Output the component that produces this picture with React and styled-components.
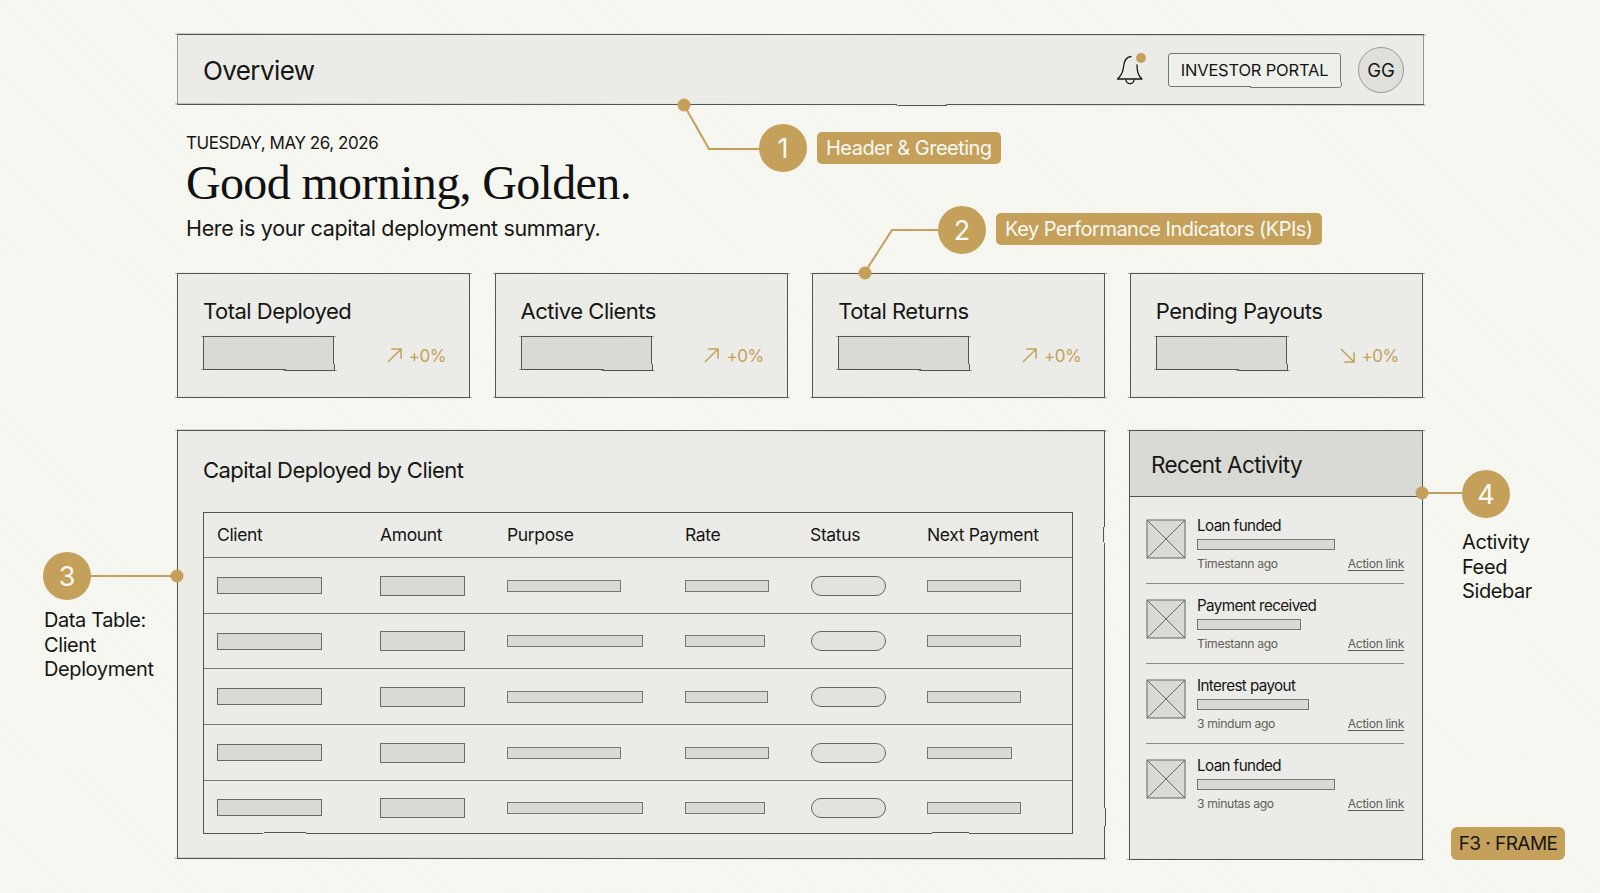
import styled, { createGlobalStyle, css } from "styled-components"

const INK = "#161614"
const GOLD = "#c4a05a"
const PANEL = "#ebece7"
const FILL = "#d9dad5"
const LINE = "#55554f"

const GlobalStyle = createGlobalStyle`
  html, body {
    margin: 0;
    padding: 0;
    background: #f7f7f2;
  }
  body {
    font-family: Inter, "Liberation Sans", sans-serif;
    color: ${INK};
  }
`

// pencil outline: a rough box plus a second stroke that overshoots the corners
const sketch = css`
  position: relative;
  &::before,
  &::after {
    content: "";
    position: absolute;
    inset: 0;
    border: 1px solid ${props => props.$ink || LINE};
    filter: url(#rough);
    pointer-events: none;
  }
  &::after {
    inset: 0 -2px;
    border-width: 1px 0;
    opacity: 0.5;
    transform: rotate(0.05deg);
  }
`

const Page = styled.div`
  position: relative;
  width: 1600px;
  height: 893px;
  overflow: hidden;
  box-sizing: border-box;
  padding: 34px 176px 0 177px;
  background-image: repeating-linear-gradient(45deg, rgba(90, 90, 70, 0.012) 0 1px, transparent 1px 3px);
`
const Header = styled.header`
  ${sketch}
  display: flex;
  align-items: center;
  height: 71px;
  padding: 0 20px 0 26px;
  background: ${PANEL};
  &::before {
    border-left-color: rgba(85, 85, 79, 0.55);
    border-right-color: rgba(85, 85, 79, 0.55);
  }
`
const PageTitle = styled.h2`
  flex: 1;
  margin: 2px 0 0;
  font-size: 26px;
  font-weight: 400;
  letter-spacing: -0.6px;
`
const BellWrap = styled.div`
  position: relative;
  width: 28px;
  height: 30px;
  margin-right: 24px;
  svg { display: block; }
`
const BellDot = styled.span`
  position: absolute;
  top: -2px;
  right: -2px;
  width: 10px;
  height: 10px;
  border-radius: 50%;
  background: ${GOLD};
`
const PortalBtn = styled.button`
  ${sketch}
  width: 173px;
  height: 34px;
  margin-right: 17px;
  padding: 0;
  border: 0;
  background: #eef0eb;
  color: ${INK};
  font-family: inherit;
  font-size: 16.5px;
  letter-spacing: -0.2px;
  &::before { border-radius: 3px; }
  &::after { display: none; }
`
const Avatar = styled.div`
  display: flex;
  align-items: center;
  justify-content: center;
  box-sizing: border-box;
  width: 46px;
  height: 46px;
  border: 1.5px solid #9a9a94;
  border-radius: 50%;
  background: #dfe0db;
  font-size: 18.5px;
`
const Greeting = styled.section`
  padding: 27px 0 0 9px;
  height: 168px;
  box-sizing: border-box;
`
const DateLine = styled.div`
  font-size: 17px;
  line-height: 22px;
  letter-spacing: -0.45px;
`
const Hello = styled.h1`
  margin: 0;
  font-family: "Liberation Serif", serif;
  font-size: 48px;
  font-weight: 400;
  line-height: 58px;
  letter-spacing: -0.65px;
  color: #111;
`
const Summary = styled.p`
  margin: 1px 0 0;
  font-size: 21.5px;
  line-height: 30px;
  letter-spacing: -0.33px;
`
const KpiRow = styled.section`
  display: grid;
  grid-template-columns: repeat(4, 293px);
  gap: 24.6px;
`
const KpiCard = styled.article`
  ${sketch}
  display: grid;
  grid-template-columns: 131px 1fr;
  grid-template-rows: 24px 34px;
  row-gap: 13px;
  height: 125px;
  box-sizing: border-box;
  padding: 26px 25px 0 26px;
  background: ${PANEL};
`
const KpiTitle = styled.h3`
  grid-column: 1 / 3;
  margin: 0;
  font-size: 22px;
  line-height: 24px;
  font-weight: 400;
  letter-spacing: -0.5px;
  white-space: nowrap;
`
const ValueBox = styled.div`
  ${sketch}
  background: ${FILL};
`
const Delta = styled.div`
  display: flex;
  align-items: center;
  justify-content: flex-end;
  gap: 7px;
  padding-top: 5px;
  margin-right: -1px;
  color: ${GOLD};
  font-size: 17px;
  letter-spacing: -0.5px;
`
const MainGrid = styled.main`
  display: grid;
  grid-template-columns: 928px 294px;
  gap: 24px;
  margin-top: 32px;
`
const TablePanel = styled.section`
  ${sketch}
  box-sizing: border-box;
  height: 429px;
  padding: 25px 32px 0 26px;
  background: ${PANEL};
`
const TableTitle = styled.h3`
  margin: 0 0 27px;
  font-size: 22px;
  line-height: 30px;
  font-weight: 400;
  letter-spacing: -0.54px;
`
const Table = styled.div`
  ${sketch}
  display: grid;
  grid-template-rows: 46px 56px 55px 56px 56px 53px;
  height: 322px;
  &::after { display: none; }
`
const Row = styled.div`
  display: grid;
  grid-template-columns: 163px 127px 178px 125px 117px 1fr;
  align-items: center;
  padding-left: 14px;
  border-bottom: ${props => (props.$last ? "0" : "1px solid #77776f")};
`
const HeadCell = styled.div`
  font-size: 17.5px;
  letter-spacing: -0.35px;
`
const Bar = styled.div`
  ${sketch}
  width: ${props => props.$w}px;
  height: ${props => props.$h || 12}px;
  background: ${FILL};
  &::after { display: none; }
`
const Pill = styled.div`
  width: 75px;
  height: 20px;
  margin-left: 1px;
  box-sizing: border-box;
  border: 1.5px solid #66665f;
  border-radius: 10px;
  background: #e2e3de;
`
const Sidebar = styled.aside`
  ${sketch}
  height: 430px;
  background: ${PANEL};
`
const SideHead = styled.div`
  display: flex;
  align-items: center;
  box-sizing: border-box;
  height: 67px;
  padding: 2px 0 0 22px;
  background: ${FILL};
  border-bottom: 1px solid ${LINE};
  font-size: 22.5px;
  letter-spacing: -0.6px;
`
const Feed = styled.ul`
  margin: 0;
  padding: 22px 19px 0 17px;
  list-style: none;
`
const FeedItem = styled.li`
  display: grid;
  grid-template-columns: 51px 1fr;
  box-sizing: border-box;
  height: 65px;
  margin-bottom: 15px;
  border-bottom: ${props => (props.$last ? "0" : "1px solid #8a8a83")};
  svg { display: block; }
`
const FeedBody = styled.div`
  display: flex;
  flex-direction: column;
`
const FeedTitle = styled.div`
  margin-top: -3px;
  font-size: 15.2px;
  line-height: 20px;
  letter-spacing: -0.6px;
`
const FeedBar = styled(Bar)`
  margin-top: 3px;
`
const FeedMeta = styled.div`
  display: flex;
  justify-content: space-between;
  margin-top: 6px;
  color: #5f5f59;
  font-size: 12.2px;
  line-height: 16px;
  letter-spacing: -0.35px;
`
const ActionLink = styled.a`
  color: #5f5f59;
  text-decoration: underline;
  text-underline-offset: 2px;
`
// annotations sit over the wireframe on a free canvas
const Leaders = styled.svg`
  position: absolute;
  inset: 0;
  pointer-events: none;
`
const Badge = styled.div`
  position: absolute;
  left: ${props => props.$x - 24}px;
  top: ${props => props.$y - 24}px;
  display: flex;
  align-items: center;
  justify-content: center;
  width: 48px;
  height: 48px;
  border-radius: 50%;
  background: ${GOLD};
  color: #fbfaf4;
  font-size: 27px;
`
const Tag = styled.div`
  position: absolute;
  left: ${props => props.$x}px;
  top: ${props => props.$y}px;
  height: 32px;
  padding: 0 9px;
  border-radius: 5px;
  background: ${GOLD};
  color: #fbfaf4;
  font-size: 20px;
  line-height: 32px;
  letter-spacing: -0.52px;
  white-space: nowrap;
`
const Note = styled.div`
  position: absolute;
  left: ${props => props.$x}px;
  top: ${props => props.$y}px;
  font-size: 20px;
  line-height: 24.5px;
  letter-spacing: -0.4px;
`
const Stamp = styled.div`
  position: absolute;
  left: 1451px;
  top: 827px;
  width: 114px;
  height: 33px;
  border-radius: 6px;
  background: ${GOLD};
  color: ${INK};
  font-size: 19px;
  line-height: 33px;
  text-align: center;
  letter-spacing: -0.55px;
`

const kpis = [
  { title: "Total Deployed", up: true },
  { title: "Active Clients", up: true },
  { title: "Total Returns", up: true },
  { title: "Pending Payouts", up: false },
]
const columns = ["Client", "Amount", "Purpose", "Rate", "Status", "Next Payment"]
const rows = [
  { purpose: 114, rate: 84, next: 94 },
  { purpose: 136, rate: 80, next: 94 },
  { purpose: 136, rate: 83, next: 94 },
  { purpose: 114, rate: 84, next: 85 },
  { purpose: 136, rate: 80, next: 94 },
]
const feed = [
  { title: "Loan funded", bar: 138, time: "Timestann ago" },
  { title: "Payment received", bar: 104, time: "Timestann ago" },
  { title: "Interest payout", bar: 112, time: "3 mindum ago" },
  { title: "Loan funded", bar: 138, time: "3 minutas ago" },
]

function RoughFilter() {
  return (
    <svg width="0" height="0" style={{ position: "absolute" }}>
      <filter id="rough" x="-5%" y="-30%" width="110%" height="160%">
        <feTurbulence type="fractalNoise" baseFrequency="0.006 0.012" numOctaves="1" seed="4" result="wobble" />
        <feDisplacementMap in="SourceGraphic" in2="wobble" scale="2.4" result="bent" />
        <feTurbulence type="fractalNoise" baseFrequency="0.8" numOctaves="1" seed="9" result="grain" />
        <feDisplacementMap in="bent" in2="grain" scale="1" />
      </filter>
    </svg>
  )
}

function Bell() {
  return (
    <svg width="28" height="30" viewBox="0 0 28 30" fill="none" stroke={INK} strokeWidth="1.3" strokeLinecap="round" strokeLinejoin="round">
      <path d="M15 1.5C10 2 8 6 7.5 12C7 17 6 20 1.5 24H26C22 21 21 17 21 10" />
      <path d="M10 25a4 3.6 0 0 0 8 0" />
    </svg>
  )
}

function Trend({ up }) {
  return (
    <svg width="15" height="15" viewBox="0 0 16 16" fill="none" stroke={GOLD} strokeWidth="1.6">
      {up ? <path d="M1 15L15 1M4.5 1H15V11.5" /> : <path d="M1 1L15 15M4.5 15H15V4.5" />}
    </svg>
  )
}

function Thumb() {
  return (
    <svg width="40" height="40" viewBox="0 0 40 40" fill={FILL} stroke="#66665f" strokeWidth="1">
      <rect x="1" y="1" width="38" height="38" />
      <path d="M1 1L39 39M39 1L1 39" fill="none" />
    </svg>
  )
}

function App() {
  return (
    <Page>
      <GlobalStyle />
      <RoughFilter />
      <Header>
        <PageTitle>Overview</PageTitle>
        <BellWrap>
          <Bell />
          <BellDot />
        </BellWrap>
        <PortalBtn $ink="#77776f">INVESTOR PORTAL</PortalBtn>
        <Avatar>GG</Avatar>
      </Header>

      <Greeting>
        <DateLine>TUESDAY, MAY 26, 2026</DateLine>
        <Hello>Good morning, Golden.</Hello>
        <Summary>Here is your capital deployment summary.</Summary>
      </Greeting>

      <KpiRow>
        {kpis.map(kpi => (
          <KpiCard key={kpi.title}>
            <KpiTitle>{kpi.title}</KpiTitle>
            <ValueBox />
            <Delta>
              <Trend up={kpi.up} />
              +0%
            </Delta>
          </KpiCard>
        ))}
      </KpiRow>

      <MainGrid>
        <TablePanel>
          <TableTitle>Capital Deployed by Client</TableTitle>
          <Table>
            <Row>
              {columns.map(col => (
                <HeadCell key={col}>{col}</HeadCell>
              ))}
            </Row>
            {rows.map((row, i) => (
              <Row key={i} $last={i === rows.length - 1}>
                <Bar $w={105} $h={17} $ink="#6a6a63" />
                <Bar $w={85} $h={20} $ink="#6a6a63" />
                <Bar $w={row.purpose} $ink="#77776f" />
                <Bar $w={row.rate} $ink="#77776f" />
                <Pill />
                <Bar $w={row.next} $ink="#77776f" />
              </Row>
            ))}
          </Table>
        </TablePanel>

        <Sidebar>
          <SideHead>Recent Activity</SideHead>
          <Feed>
            {feed.map((item, i) => (
              <FeedItem key={i} $last={i === feed.length - 1}>
                <Thumb />
                <FeedBody>
                  <FeedTitle>{item.title}</FeedTitle>
                  <FeedBar $w={item.bar} $h={11} $ink="#77776f" />
                  <FeedMeta>
                    <span>{item.time}</span>
                    <ActionLink>Action link</ActionLink>
                  </FeedMeta>
                </FeedBody>
              </FeedItem>
            ))}
          </Feed>
        </Sidebar>
      </MainGrid>

      <Leaders width="1600" height="893" fill={GOLD} stroke="none">
        <g fill="none" stroke={GOLD} strokeWidth="2">
          <path d="M684 105L709 149H765" />
          <path d="M865 272L892 230H945" />
          <path d="M177 576H70" />
          <path d="M1422 493H1470" />
        </g>
        <circle cx="684" cy="105" r="6.5" />
        <circle cx="865" cy="273" r="6.5" />
        <circle cx="177" cy="576" r="6.5" />
        <circle cx="1422" cy="493" r="6.5" />
      </Leaders>

      <Badge $x={783} $y={148}>1</Badge>
      <Tag $x={817} $y={132}>Header &amp; Greeting</Tag>
      <Badge $x={962} $y={230}>2</Badge>
      <Tag $x={996} $y={213}>Key Performance Indicators (KPIs)</Tag>
      <Badge $x={67} $y={576}>3</Badge>
      <Note $x={44} $y={608}>Data Table:<br />Client<br />Deployment</Note>
      <Badge $x={1486} $y={494}>4</Badge>
      <Note $x={1462} $y={530}>Activity<br />Feed<br />Sidebar</Note>
      <Stamp>F3 · FRAME</Stamp>
    </Page>
  )
}

export default App
